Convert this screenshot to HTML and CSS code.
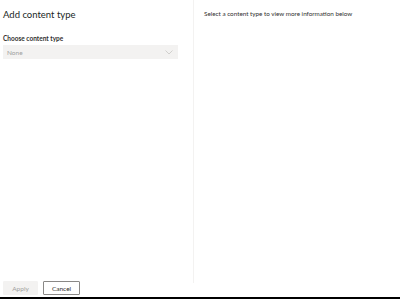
FILE: index.html
```html
<!DOCTYPE html>
<html>
<head>
<meta charset="utf-8">
<link rel="stylesheet" href="styles.css">
</head>
<body>
<div class="page">
  <div class="main">
    <div class="left">
      <div class="form">
        <h1 class="title">Add content type</h1>
        <div class="label">Choose content type</div>
        <div class="dropdown">
          <span class="placeholder">None</span>
          <svg class="chevron" width="8" height="5" viewBox="0 0 8 5"><path d="M0.5 0.5 L4 4 L7.5 0.5" fill="none" stroke="#c8c6c4" stroke-width="0.8"/></svg>
        </div>
      </div>
      <div class="footer">
        <button class="btn btn-primary" disabled>Apply</button>
        <button class="btn btn-default">Cancel</button>
      </div>
    </div>
    <div class="right">
      <p class="hint">Select a content type to view more information below</p>
    </div>
  </div>
  <div class="bottombar"></div>
</div>
</body>
</html>
```
FILE: styles.css
```css
html, body {
  margin: 0;
  padding: 0;
  background: #ffffff;
}
body {
  font-family: "Lato", "Open Sans", sans-serif;
  color: #323130;
}
.page {
  width: 400px;
  height: 299px;
  display: flex;
  flex-direction: column;
}
.main {
  flex: 1;
  display: flex;
  min-height: 0;
}
.left {
  width: 193px;
  display: flex;
  flex-direction: column;
  justify-content: space-between;
}
.form {
  padding: 0 15px 0 3px;
}
.title {
  margin: 0;
  padding-top: 8px;
  font-size: 9.5px;
  font-weight: 400;
  line-height: 14px;
  color: #201f1e;
}
.label {
  margin-top: 12px;
  font-size: 6.5px;
  font-weight: 700;
  line-height: 9px;
  color: #323130;
}
.dropdown {
  margin-top: 2px;
  height: 14px;
  background: #f3f2f1;
  display: flex;
  align-items: center;
  justify-content: space-between;
  padding: 0 5px 0 4px;
}
.placeholder {
  font-size: 6.5px;
  color: #a19f9d;
}
.chevron {
  display: block;
}
.footer {
  display: flex;
  gap: 5px;
  padding: 0 0 2px 3px;
}
.btn {
  height: 14px;
  padding: 0;
  font-family: inherit;
  font-size: 6.5px;
  border-radius: 1px;
  box-sizing: border-box;
}
.btn-primary {
  width: 35px;
  background: #f3f2f1;
  border: 1px solid #f3f2f1;
  color: #a19f9d;
}
.btn-default {
  width: 37px;
  background: #ffffff;
  border: 1px solid #8a8886;
  color: #323130;
}
.right {
  flex: 1;
  align-self: flex-start;
  height: 283px;
  border-left: 1px solid #f3f2f1;
  padding-left: 10px;
}
.hint {
  margin: 9px 0 0 0;
  font-size: 6.3px;
  line-height: 9px;
  color: #323130;
}
.bottombar {
  height: 2px;
  background: #000000;
}
```
